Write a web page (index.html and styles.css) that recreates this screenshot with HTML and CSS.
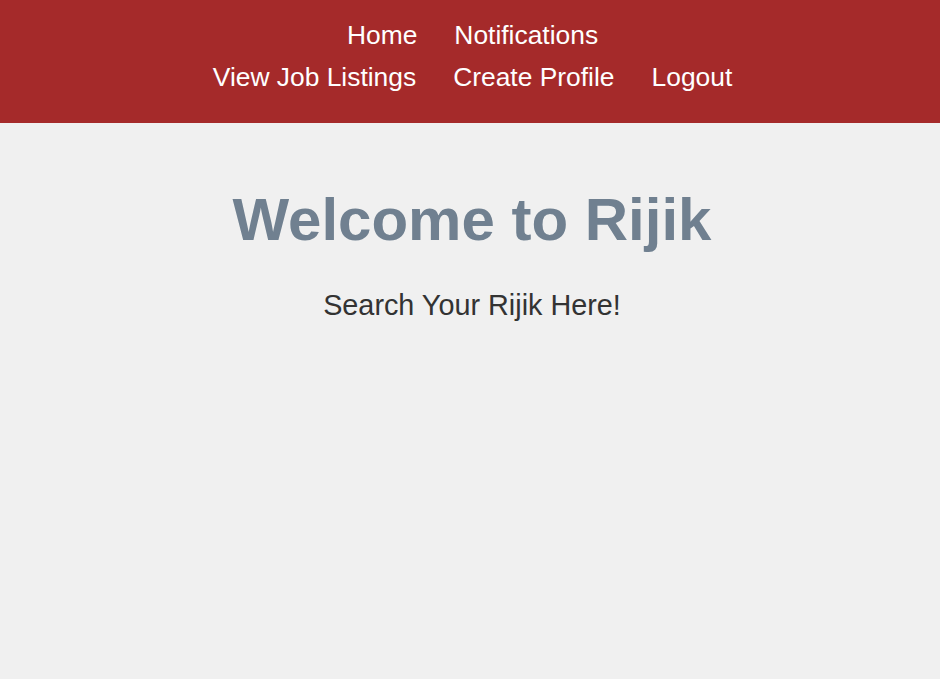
FILE: index.html
```html
<!DOCTYPE html>
<html lang="en">
<head>
<meta charset="utf-8">
<title>Rijik</title>
<link rel="stylesheet" href="styles.css">
</head>
<body>
<header class="site-header">
  <nav class="main-nav">
    <div class="nav-row">
      <a href="#" class="nav-link">Home</a>
      <a href="#" class="nav-link">Notifications</a>
    </div>
    <div class="nav-row">
      <a href="#" class="nav-link">View Job Listings</a>
      <a href="#" class="nav-link">Create Profile</a>
      <a href="#" class="nav-link">Logout</a>
    </div>
  </nav>
</header>
<main class="hero">
  <h1 class="hero-title">Welcome to Rijik</h1>
  <p class="hero-sub">Search Your Rijik Here!</p>
</main>
</body>
</html>
```
FILE: styles.css
```css
html, body {
  margin: 0;
  padding: 0;
  background: #f0f0f0;
  font-family: "Liberation Sans", Arial, sans-serif;
  min-height: 100%;
}

.site-header {
  background: #a52a2a;
  padding: 14px 0 25px 5px;
}

.main-nav {
  display: flex;
  flex-direction: column;
  align-items: center;
}

.nav-row {
  display: flex;
  justify-content: center;
}

.nav-link {
  color: #ffffff;
  text-decoration: none;
  font-size: 26.4px;
  padding: 6px 18.5px;
  line-height: 30px;
}

.hero {
  text-align: center;
  padding: 62px 0 0 4px;
}

.hero-title {
  margin: 0;
  font-size: 60px;
  font-weight: bold;
  color: #708090;
}

.hero-sub {
  margin: 35px 0 0;
  font-size: 28.8px;
  color: #333333;
}
```
